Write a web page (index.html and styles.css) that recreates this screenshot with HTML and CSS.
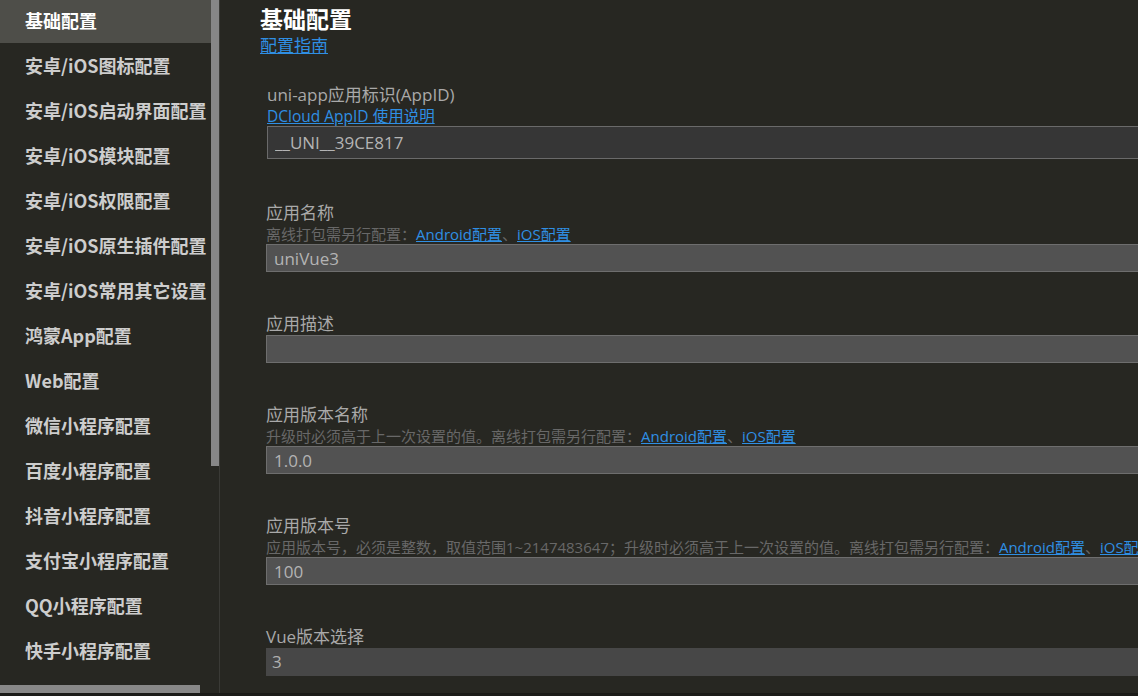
FILE: index.html
```html
<!DOCTYPE html>
<html>
<head lang="zh-CN">
    <meta charset="UTF-8">
    <title>manifest.json</title>
    <link rel="stylesheet" href="styles.css">
</head>
<body>
<div class="app">
    <div class="side">
        <ul class="side-nav">
            <li class="active">基础配置</li>
            <li>安卓/iOS图标配置</li>
            <li>安卓/iOS启动界面配置</li>
            <li>安卓/iOS模块配置</li>
            <li>安卓/iOS权限配置</li>
            <li>安卓/iOS原生插件配置</li>
            <li>安卓/iOS常用其它设置</li>
            <li>鸿蒙App配置</li>
            <li>Web配置</li>
            <li>微信小程序配置</li>
            <li>百度小程序配置</li>
            <li>抖音小程序配置</li>
            <li>支付宝小程序配置</li>
            <li>QQ小程序配置</li>
            <li>快手小程序配置</li>
        </ul>
        <div class="vscroll"><div class="vscroll-thumb"></div></div>
        <div class="hscroll"></div>
    </div>
    <div class="main">
        <h2 class="page-title">基础配置</h2>
        <a class="link guide" href="javascript:void(0);">配置指南</a>

        <div class="field field-first">
            <label>uni-app应用标识(AppID)</label>
            <div class="hint"><a class="link" href="javascript:void(0);">DCloud AppID 使用说明</a></div>
            <input type="text" class="text-input readonly" value="__UNI__39CE817" readonly>
        </div>

        <div class="field">
            <label>应用名称</label>
            <div class="hint">离线打包需另行配置：<a class="link" href="javascript:void(0);">Android配置</a>、<a class="link" href="javascript:void(0);">iOS配置</a></div>
            <input type="text" class="text-input" value="uniVue3">
        </div>

        <div class="field">
            <label>应用描述</label>
            <input type="text" class="text-input" value="">
        </div>

        <div class="field">
            <label>应用版本名称</label>
            <div class="hint">升级时必须高于上一次设置的值。离线打包需另行配置：<a class="link" href="javascript:void(0);">Android配置</a>、<a class="link" href="javascript:void(0);">iOS配置</a></div>
            <input type="text" class="text-input" value="1.0.0">
        </div>

        <div class="field">
            <label>应用版本号</label>
            <div class="hint">应用版本号，必须是整数，取值范围1~2147483647；升级时必须高于上一次设置的值。离线打包需另行配置：<a class="link" href="javascript:void(0);">Android配置</a>、<a class="link" href="javascript:void(0);">iOS配置</a></div>
            <input type="text" class="text-input" value="100">
        </div>

        <div class="field">
            <label>Vue版本选择</label>
            <div class="select">3</div>
        </div>
    </div>
</div>
</body>
</html>
```

FILE: styles.css
```css
ul, li, div, p, span, h2, a, label {
    padding: 0px;
    margin: 0px;
}
html, body {
    margin: 0px;
    height: 100%;
    overflow: hidden;
}
body {
    background: #1c1c19;
    font-family: "Open Sans", "Noto Sans CJK SC", sans-serif;
    color: #a8a8a8;
}
.app {
    display: flex;
    height: 693px;
    background: #272722;
    border-bottom: 1px solid #1a1a17;
}

/* 左侧导航 */
.side {
    position: relative;
    display: flex;
    width: 219px;
    flex-shrink: 0;
    border-right: 1px solid #3a3a36;
    overflow: hidden;
}
.side-nav {
    list-style: none;
    width: 211px;
    margin-top: -2px;
    overflow: hidden;
}
.side-nav li {
    height: 45px;
    line-height: 45px;
    padding-left: 25px;
    font-family: "Noto Sans CJK SC", sans-serif;
    font-size: 18px;
    font-weight: bold;
    color: #cdcdcd;
    white-space: nowrap;
}
.side-nav li.active {
    background: #4e4e49;
    color: #ffffff;
}
.vscroll {
    width: 8px;
    flex-shrink: 0;
}
.vscroll-thumb {
    height: 466px;
    background: #878787;
}
.hscroll {
    position: absolute;
    left: 0px;
    bottom: 0px;
    width: 200px;
    height: 8px;
    background: #888888;
}

/* 右侧内容 */
.main {
    flex: 1;
    padding: 4px 0px 0px 40px;
    white-space: nowrap;
    overflow: hidden;
}
.page-title {
    font-family: "Noto Sans CJK SC", sans-serif;
    font-size: 23px;
    line-height: 28px;
    font-weight: bold;
    color: #ffffff;
    margin-bottom: 3px;
}
.link {
    color: #2f8fe4;
    text-decoration: underline;
}
.guide {
    display: inline-block;
    font-size: 17px;
    line-height: 22px;
    margin-bottom: 27px;
}
.field {
    width: 900px;
    padding-left: 6px;
    margin-bottom: 41px;
}
.field-first {
    padding-left: 7px;
    margin-bottom: 43px;
}
.field label {
    display: block;
    font-size: 17px;
    line-height: 22px;
    color: #a9a9a9;
}
.hint {
    font-size: 15px;
    line-height: 20px;
    color: #686868;
}
.field-first .hint {
    font-size: 15.5px;
}
.text-input {
    display: block;
    box-sizing: border-box;
    width: 100%;
    height: 28px;
    margin: 0px;
    padding: 0px 7px;
    background: #525252;
    border: 1px solid #6e6e6e;
    font-family: "Open Sans", "Noto Sans CJK SC", sans-serif;
    font-size: 17px;
    color: #b4b4b4;
    outline: none;
}
.text-input.readonly {
    height: 33px;
    background: #363636;
    border-color: #6a6a6a;
}
.select {
    box-sizing: border-box;
    height: 28px;
    line-height: 28px;
    padding-left: 6px;
    background: #474747;
    font-size: 17px;
    color: #b0b0b0;
}
```
